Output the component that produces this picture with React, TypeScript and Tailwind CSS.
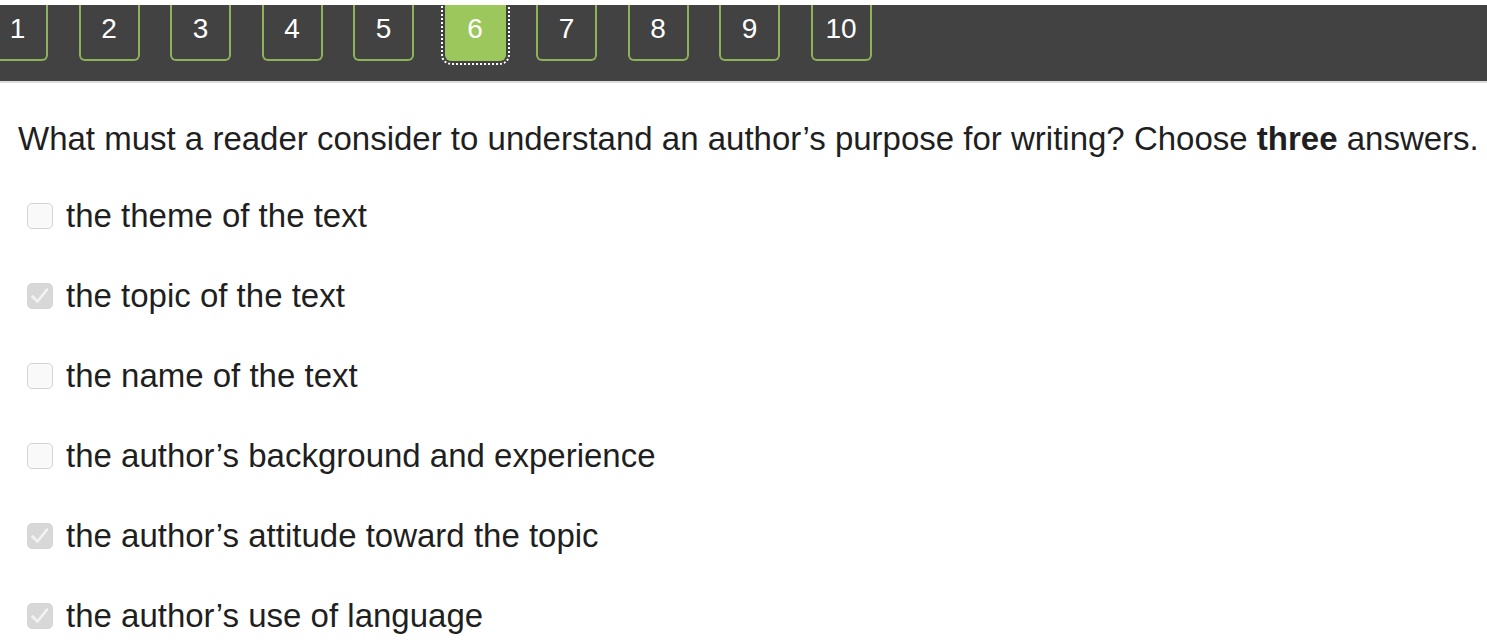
import React from 'react';

const options = [
    { label: 'the theme of the text', checked: false },
    { label: 'the topic of the text', checked: true },
    { label: 'the name of the text', checked: false },
    { label: 'the author\u2019s background and experience', checked: false },
    { label: 'the author\u2019s attitude toward the topic', checked: true },
    { label: 'the author\u2019s use of language', checked: true },
];

const Checkbox: React.FC<{ checked: boolean }> = ({ checked }) => (
    <span
        className={`flex h-[26px] w-[26px] shrink-0 items-center justify-center rounded-[5px] border ${
            checked ? 'border-[#d6d6d6] bg-[#d8d8d8]' : 'border-[#d4d4d4] bg-[#f9f9f9]'
        }`}
    >
        {checked && (
            <svg width="24" height="24" viewBox="0 0 24 24" fill="none">
                <path d="M4.5 12.5 L9.5 17.5 L19 5.5" stroke="#f3f3f3" strokeWidth="2.6" strokeLinecap="round" strokeLinejoin="round" />
            </svg>
        )}
    </span>
);

export default function App() {
    const pages = [1, 2, 3, 4, 5, 6, 7, 8, 9, 10];
    const current = 6;

    return (
        <div className="min-h-[640px] bg-white text-[#1f1f1f]" style={{ fontFamily: '"Liberation Sans", Arial, sans-serif' }}>
            <div className="h-[5px] bg-white" />
            <nav className="h-[78px] overflow-hidden border-b-2 border-[#dcdcdc] bg-[#424242]">
                <div className="ml-[-13px] flex gap-[30.5px]">
                    {pages.map(p => (
                        <button
                            key={p}
                            className={`flex h-[56px] w-[61px] items-center justify-center rounded-b-[6px] border-x-2 border-b-2 pb-[6px] text-[28px] text-white ${
                                p === current
                                    ? 'border-[#9cc75c] bg-[#9cc75c] outline-2 outline-offset-[2px] outline-dotted outline-white'
                                    : 'border-[#8db35a] bg-[#424242]'
                            }`}
                        >
                            {p}
                        </button>
                    ))}
                </div>
            </nav>
            <div className="pl-[18px] pt-[36px]">
                <p className="text-[33px] leading-[40px]">
                    What must a reader consider to understand an author’s purpose for writing? Choose <b>three</b> answers.
                </p>
                <ul className="mt-[44px] flex flex-col gap-[54px] pl-[9px]">
                    {options.map(o => (
                        <li key={o.label} className="flex h-[26px] items-center gap-[13px] text-[33px]">
                            <Checkbox checked={o.checked} />
                            <span>{o.label}</span>
                        </li>
                    ))}
                </ul>
            </div>
        </div>
    );
}
